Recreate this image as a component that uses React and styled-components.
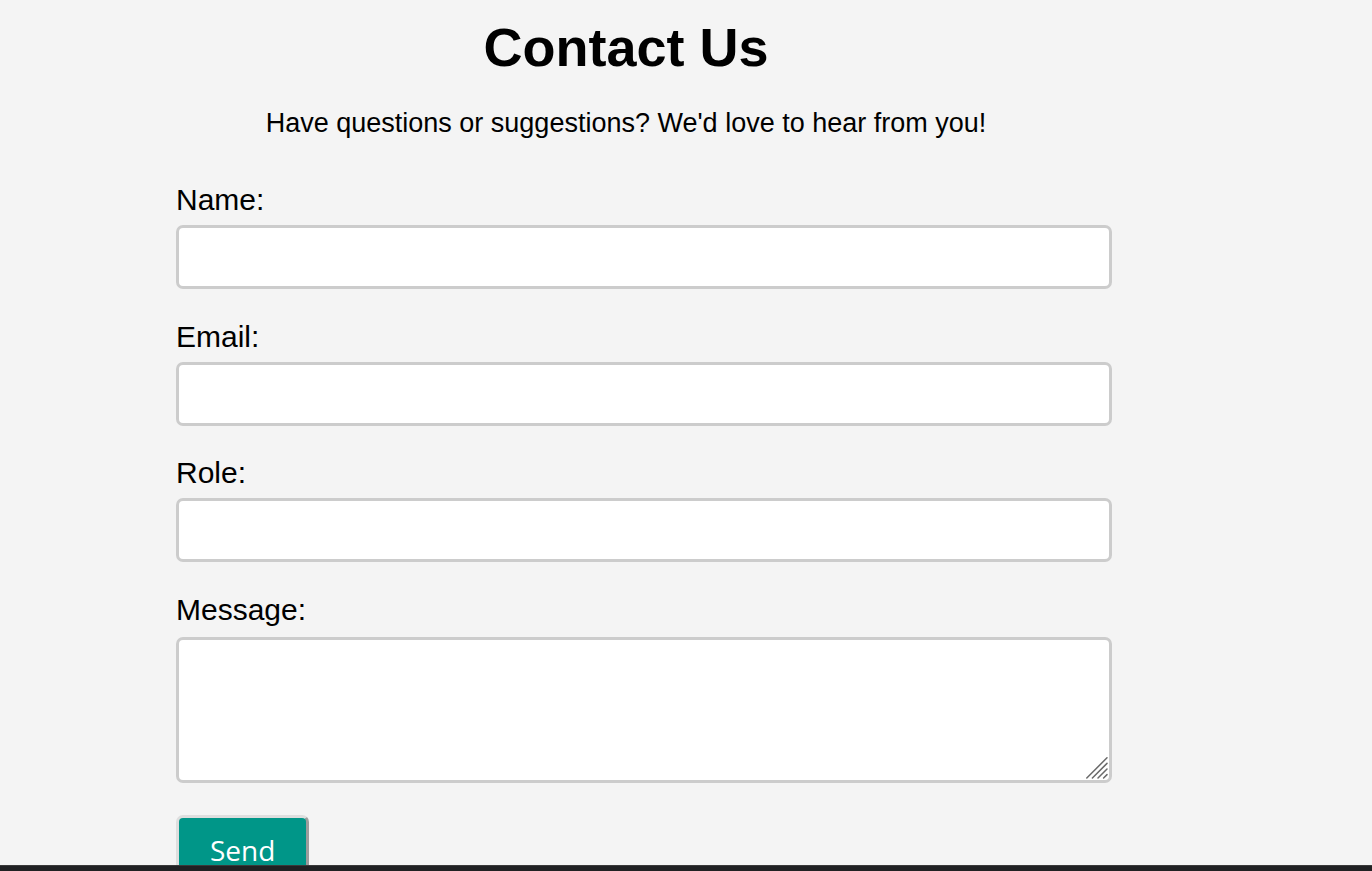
import React from "react";
import styled, { createGlobalStyle } from "styled-components";

const GlobalStyle = createGlobalStyle`
  html {
    scrollbar-width: none;
  }
  html::-webkit-scrollbar {
    width: 0;
    height: 0;
  }
  body {
    margin: 0;
    background: #f4f4f4;
    color: #000;
    font-family: "Liberation Sans", Arial, sans-serif;
  }
`;

const Page = styled.div`
  padding: 0 0 0 176px;
`;

const Container = styled.main`
  width: 900px;
  display: flex;
  flex-direction: column;
`;

const Title = styled.h1`
  margin: 15.7px 0 0;
  font-size: 54px;
  line-height: 62px;
  font-weight: 700;
  text-align: center;
`;

const Subtitle = styled.p`
  margin: 30px 0 0;
  font-size: 27px;
  line-height: 31px;
  text-align: center;
`;

const Form = styled.form`
  margin-top: 44.8px;
  display: flex;
  flex-direction: column;
  align-items: flex-start;
`;

const Label = styled.label`
  display: block;
  font-size: 30px;
  line-height: 34px;
  margin-bottom: 8px;
`;

const Input = styled.input`
  display: block;
  box-sizing: content-box;
  width: 100%;
  height: 58px;
  padding: 0 15px;
  margin: 0 0 30.5px;
  border: 3px solid #cccccc;
  border-radius: 7px;
  background: #fff;
  font-family: "Liberation Sans", Arial, sans-serif;
  font-size: 24px;
  outline: none;
`;

const TextAreaWrap = styled.div`
  position: relative;
  width: 936px;
  margin: 2px 0 32px;
`;

const TextArea = styled.textarea`
  display: block;
  box-sizing: border-box;
  width: 100%;
  height: 146.5px;
  padding: 8px 15px;
  margin: 0;
  border: 3px solid #cccccc;
  border-radius: 7px;
  background: #fff;
  font-family: "Liberation Sans", Arial, sans-serif;
  font-size: 24px;
  resize: none;
  outline: none;
`;

const Grip = styled.svg`
  position: absolute;
  right: 4.5px;
  bottom: 4px;
  width: 22px;
  height: 22px;
  pointer-events: none;
`;

const SendButton = styled.button`
  background: #009688;
  color: #fff;
  font-family: "Open Sans", "Noto Sans", sans-serif;
  font-size: 28px;
  line-height: 38px;
  padding: 13px 31px 11px;
  border-width: 3px;
  border-style: solid;
  border-color: #dedede #9c9c9c #9c9c9c #dedede;
  border-radius: 7px;
  cursor: pointer;
`;

const Footer = styled.footer`
  position: fixed;
  left: 0;
  right: 0;
  bottom: 0;
  height: 5px;
  background: #202123;
  border-top: 1px solid #3a3a3a;
`;

const fields = [
  { id: "name", label: "Name:", type: "text" },
  { id: "email", label: "Email:", type: "email" },
  { id: "role", label: "Role:", type: "text" },
];

export default function App() {
  return (
    <>
      <GlobalStyle />
      <Page>
        <Container>
          <Title>Contact Us</Title>
          <Subtitle>Have questions or suggestions? We'd love to hear from you!</Subtitle>
          <Form onSubmit={(e) => e.preventDefault()}>
            {fields.map((f) => (
              <React.Fragment key={f.id}>
                <Label htmlFor={f.id}>{f.label}</Label>
                <Input id={f.id} name={f.id} type={f.type} />
              </React.Fragment>
            ))}
            <Label htmlFor="message">Message:</Label>
            <TextAreaWrap>
              <TextArea id="message" name="message" />
              <Grip viewBox="0 0 22 22" aria-hidden="true">
                <g stroke="#6a6a6a" strokeWidth="1.5" strokeLinecap="round">
                  <line x1="0.8" y1="21" x2="21" y2="0.8" />
                  <line x1="6.4" y1="21" x2="21" y2="6.4" />
                  <line x1="12" y1="21" x2="21" y2="12" />
                  <line x1="17.6" y1="21" x2="21" y2="17.6" />
                </g>
              </Grip>
            </TextAreaWrap>
            <SendButton type="submit">Send</SendButton>
          </Form>
        </Container>
      </Page>
      <Footer />
    </>
  );
}
